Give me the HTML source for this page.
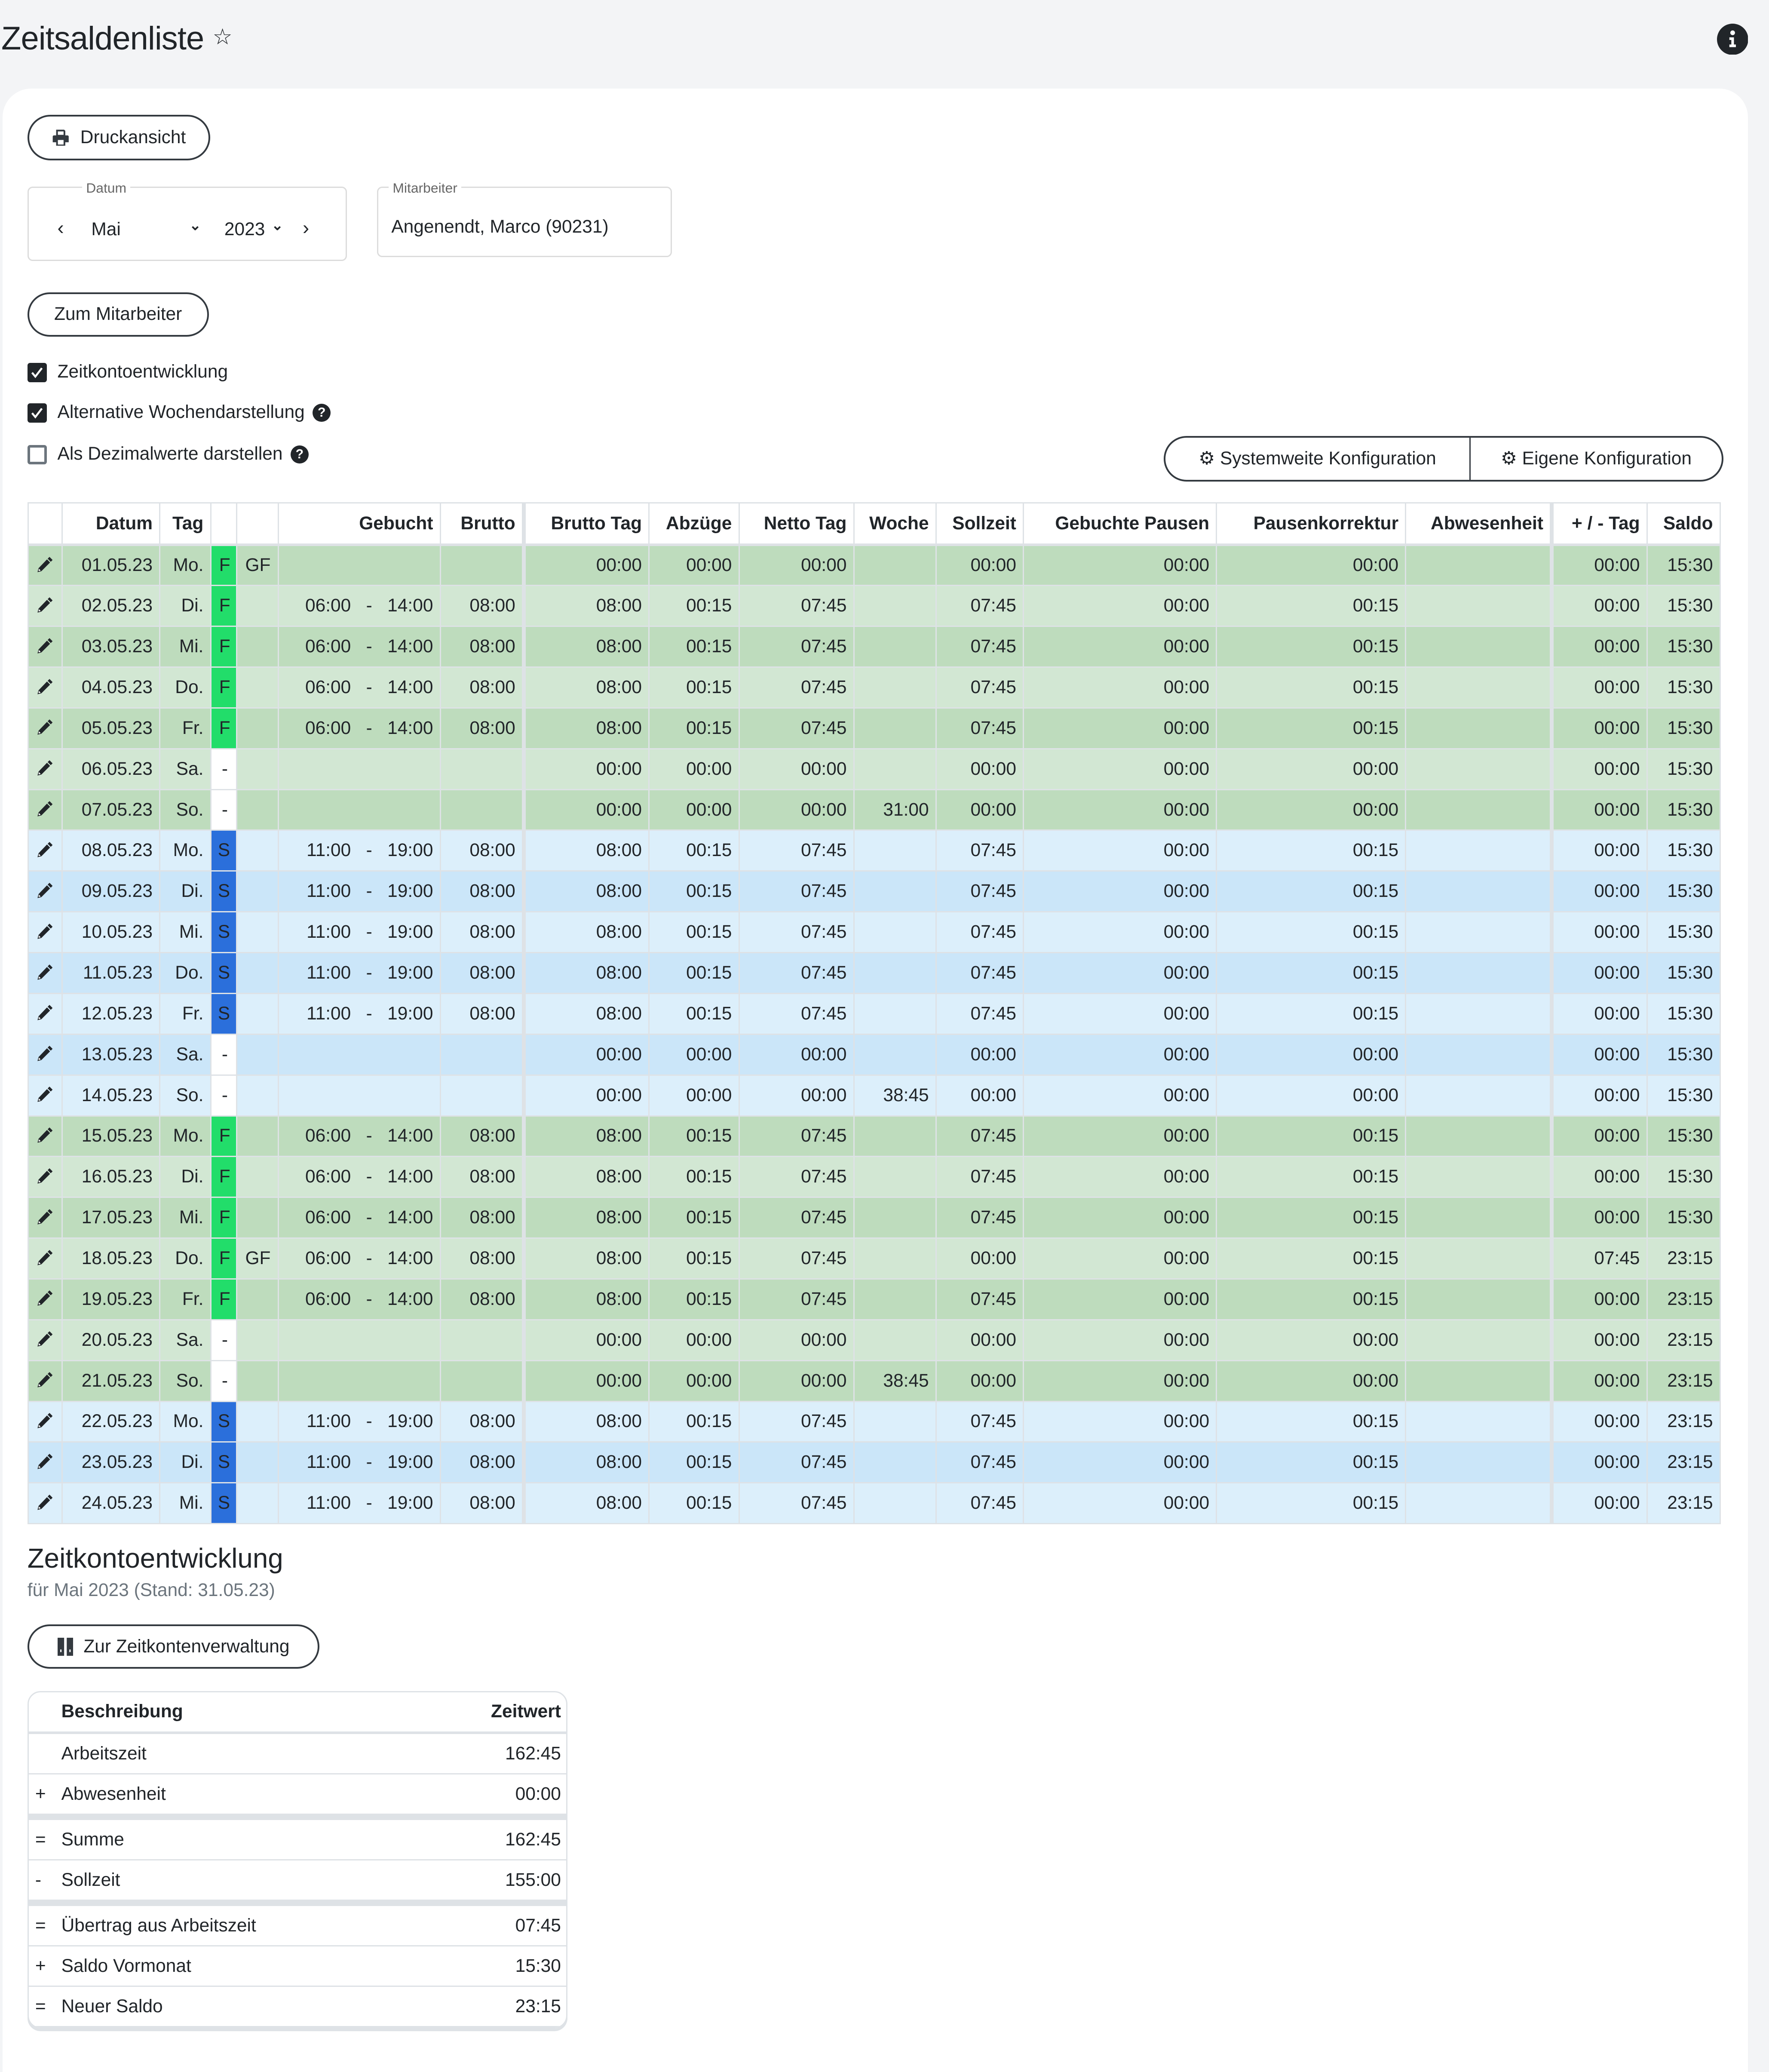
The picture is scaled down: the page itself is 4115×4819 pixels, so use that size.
<!DOCTYPE html>
<html><head><meta charset="utf-8">
<style>
html,body{margin:0;padding:0;}
body{width:4115px;height:4760px;overflow:hidden;background:#f3f4f6;}
#w{zoom:3.0347;width:1356px;height:1568px;position:relative;font-family:"Liberation Sans",sans-serif;color:#212529;font-size:14px;}
.a{position:absolute;}
h1{position:absolute;left:1px;top:15px;margin:0;font-size:25px;font-weight:normal;letter-spacing:-0.3px;}
.card{position:absolute;left:2px;top:68px;width:1338px;height:1520px;background:#fff;border-radius:22px 22px 0 0;}
.btn{position:absolute;border:1.5px solid #343a40;border-radius:18px;box-sizing:border-box;font-size:14px;display:flex;align-items:center;justify-content:center;background:#fff;}
.fs{position:absolute;border:1px solid #dcdcdc;border-radius:4px;box-sizing:border-box;}
.fs .lg{position:absolute;top:-6px;background:#fff;font-size:10.5px;color:#666;padding:0 3px;}
.cb{position:absolute;width:15px;height:15px;border-radius:2px;background:#212529;}
.cb.e{background:#fff;border:2px solid #6c757d;box-sizing:border-box;width:15px;height:15px}
.q{display:inline-block;width:14px;height:14px;border-radius:50%;background:#212529;color:#fff;font-size:10px;font-weight:bold;text-align:center;line-height:14px;vertical-align:1px;margin-left:6px}
table.t{position:absolute;left:21px;top:385px;border-collapse:collapse;table-layout:fixed;width:1298px;font-size:14px;}
table.t td,table.t th{border:1px solid #dee2e6;height:31.26px;padding:0 5px 0 0;text-align:right;white-space:nowrap;overflow:hidden;box-sizing:border-box}
table.t th{height:32px;background:#fff;font-weight:bold;border-bottom:2px solid #dee2e6}
table.t td.p{padding:0;text-align:center}
table.t td.k{padding:0 0 0 6px;text-align:left}
table.t td.f{background:#22dd6a!important;text-align:left;padding-left:6px}
table.t td.s{background:#2b6fdb!important;text-align:left;padding-left:5px}
table.t td.n{background:#fff!important;text-align:left;padding-left:8px}
.tk{border-right:3px solid #dee2e6!important}
tr.g1 td{background:#bedcbd} tr.g2 td{background:#d2e7d3}
tr.b1 td{background:#cbe6f9} tr.b2 td{background:#dceffb}
.pen{width:14px;height:14px;vertical-align:-2px}
.zw{position:absolute;left:21px;top:1296px;width:412px;border:1px solid #dee2e6;border-radius:10px;overflow:hidden;box-shadow:0 2px 0 #dee2e6}
table.z{width:100%;border-collapse:collapse;font-size:14px;}
table.z td,table.z th{border-bottom:1px solid #dee2e6;height:30px;padding:0 4px 0 0;text-align:left}
table.z th{font-weight:bold;border-bottom:2px solid #dee2e6}
table.z .r{text-align:right}
table.z .o{width:16px;padding-left:5px}
table.z tr.sep td{border-bottom:5px solid #dee2e6}
</style></head><body><div id="w">
<h1>Zeitsaldenliste <span style="font-size:17px;vertical-align:4px">☆</span></h1>
<svg class="a" style="left:1316px;top:18px" width="24" height="24" viewBox="0 0 24 24"><circle cx="12" cy="12" r="12" fill="#212529"/><circle cx="12" cy="7" r="1.8" fill="#fff"/><path d="M9.5 10.5h3.5v5.5h1.5v2h-5v-2h1.5v-3.5h-1.5z" fill="#fff"/></svg>
<div class="card"></div>

<div class="btn" style="left:21px;top:88px;width:140px;height:35px;"><svg width="14" height="14" viewBox="0 0 16 16" style="margin-right:8px"><path d="M4 1h7l1 1v4H4z M2 6h12a1 1 0 0 1 1 1v5h-3v3H4v-3H1V7a1 1 0 0 1 1-1z" fill="#343a40"/><rect x="5.5" y="10" width="5" height="4" fill="#fff"/><rect x="5.5" y="2.5" width="5" height="3" fill="#fff"/></svg>Druckansicht</div>

<div class="fs" style="left:21px;top:143px;width:245px;height:57px"><span class="lg" style="left:41px">Datum</span>
<span class="a" style="left:22px;top:22px;font-size:15px">‹</span><span class="a" style="left:48px;top:24px">Mai</span><span class="a" style="left:123px;top:22px;font-size:11px;font-weight:bold">⌄</span><span class="a" style="left:150px;top:24px">2023</span><span class="a" style="left:186px;top:22px;font-size:11px;font-weight:bold">⌄</span><span class="a" style="left:210px;top:22px;font-size:15px">›</span></div>
<div class="fs" style="left:289px;top:143px;width:226px;height:54px"><span class="lg" style="left:8px">Mitarbeiter</span><span class="a" style="left:10px;top:22px">Angenendt, Marco (90231)</span></div>

<div class="btn" style="left:21px;top:224px;width:139px;height:34px;">Zum Mitarbeiter</div>

<div class="cb" style="left:21px;top:278px"><svg width="15" height="15" viewBox="0 0 15 15"><path d="M3.5 7.5l2.5 3 5-6.5" stroke="#fff" stroke-width="1.5" fill="none"/></svg></div><span class="a" style="left:44px;top:277px">Zeitkontoentwicklung</span>
<div class="cb" style="left:21px;top:309px"><svg width="15" height="15" viewBox="0 0 15 15"><path d="M3.5 7.5l2.5 3 5-6.5" stroke="#fff" stroke-width="1.5" fill="none"/></svg></div><span class="a" style="left:44px;top:308px">Alternative Wochendarstellung<span class="q">?</span></span>
<div class="cb e" style="left:21px;top:341px"></div><span class="a" style="left:44px;top:340px">Als Dezimalwerte darstellen<span class="q">?</span></span>

<div class="btn" style="left:892px;top:334px;width:429px;height:35px;justify-content:flex-start">
<span style="width:233px;text-align:center;border-right:1px solid #343a40;height:33px;line-height:33px">⚙ Systemweite Konfiguration</span><span style="flex:1;text-align:center">⚙ Eigene Konfiguration</span></div>

<svg width="0" height="0" style="position:absolute"><defs><symbol id="pn" viewBox="0 0 16 16"><path d="M12.1 1.2l2.7 2.7-1.6 1.6-2.7-2.7z M9.9 3.4l2.7 2.7-7.6 7.6-3.4.9.9-3.5z" fill="#212529"/><path d="M2.8 11.6l1.6 1.6-1.9.4z" fill="#fff"/></symbol></defs></svg>

<table class="t">
<colgroup><col style="width:26px"><col style="width:75px"><col style="width:39px"><col style="width:20px"><col style="width:32px"><col style="width:124px"><col style="width:64px"><col style="width:96px"><col style="width:69px"><col style="width:88px"><col style="width:63px"><col style="width:67px"><col style="width:148px"><col style="width:145px"><col style="width:112px"><col style="width:73px"><col style="width:56px"></colgroup>
<tr><th></th><th>Datum</th><th>Tag</th><th></th><th></th><th>Gebucht</th><th class="tk">Brutto</th><th>Brutto Tag</th><th>Abzüge</th><th>Netto Tag</th><th>Woche</th><th>Sollzeit</th><th>Gebuchte Pausen</th><th>Pausenkorrektur</th><th class="tk">Abwesenheit</th><th>+ / - Tag</th><th>Saldo</th></tr>
<tr class="g1"><td class="p"><svg class="pen"><use href="#pn"/></svg></td><td>01.05.23</td><td>Mo.</td><td class="f">F</td><td class="k">GF</td><td></td><td class="tk"></td><td>00:00</td><td>00:00</td><td>00:00</td><td></td><td>00:00</td><td>00:00</td><td>00:00</td><td class="tk"></td><td>00:00</td><td>15:30</td></tr>
<tr class="g2"><td class="p"><svg class="pen"><use href="#pn"/></svg></td><td>02.05.23</td><td>Di.</td><td class="f">F</td><td></td><td>06:00 &nbsp; - &nbsp; 14:00</td><td class="tk">08:00</td><td>08:00</td><td>00:15</td><td>07:45</td><td></td><td>07:45</td><td>00:00</td><td>00:15</td><td class="tk"></td><td>00:00</td><td>15:30</td></tr>
<tr class="g1"><td class="p"><svg class="pen"><use href="#pn"/></svg></td><td>03.05.23</td><td>Mi.</td><td class="f">F</td><td></td><td>06:00 &nbsp; - &nbsp; 14:00</td><td class="tk">08:00</td><td>08:00</td><td>00:15</td><td>07:45</td><td></td><td>07:45</td><td>00:00</td><td>00:15</td><td class="tk"></td><td>00:00</td><td>15:30</td></tr>
<tr class="g2"><td class="p"><svg class="pen"><use href="#pn"/></svg></td><td>04.05.23</td><td>Do.</td><td class="f">F</td><td></td><td>06:00 &nbsp; - &nbsp; 14:00</td><td class="tk">08:00</td><td>08:00</td><td>00:15</td><td>07:45</td><td></td><td>07:45</td><td>00:00</td><td>00:15</td><td class="tk"></td><td>00:00</td><td>15:30</td></tr>
<tr class="g1"><td class="p"><svg class="pen"><use href="#pn"/></svg></td><td>05.05.23</td><td>Fr.</td><td class="f">F</td><td></td><td>06:00 &nbsp; - &nbsp; 14:00</td><td class="tk">08:00</td><td>08:00</td><td>00:15</td><td>07:45</td><td></td><td>07:45</td><td>00:00</td><td>00:15</td><td class="tk"></td><td>00:00</td><td>15:30</td></tr>
<tr class="g2"><td class="p"><svg class="pen"><use href="#pn"/></svg></td><td>06.05.23</td><td>Sa.</td><td class="n">-</td><td></td><td></td><td class="tk"></td><td>00:00</td><td>00:00</td><td>00:00</td><td></td><td>00:00</td><td>00:00</td><td>00:00</td><td class="tk"></td><td>00:00</td><td>15:30</td></tr>
<tr class="g1"><td class="p"><svg class="pen"><use href="#pn"/></svg></td><td>07.05.23</td><td>So.</td><td class="n">-</td><td></td><td></td><td class="tk"></td><td>00:00</td><td>00:00</td><td>00:00</td><td>31:00</td><td>00:00</td><td>00:00</td><td>00:00</td><td class="tk"></td><td>00:00</td><td>15:30</td></tr>
<tr class="b2"><td class="p"><svg class="pen"><use href="#pn"/></svg></td><td>08.05.23</td><td>Mo.</td><td class="s">S</td><td></td><td>11:00 &nbsp; - &nbsp; 19:00</td><td class="tk">08:00</td><td>08:00</td><td>00:15</td><td>07:45</td><td></td><td>07:45</td><td>00:00</td><td>00:15</td><td class="tk"></td><td>00:00</td><td>15:30</td></tr>
<tr class="b1"><td class="p"><svg class="pen"><use href="#pn"/></svg></td><td>09.05.23</td><td>Di.</td><td class="s">S</td><td></td><td>11:00 &nbsp; - &nbsp; 19:00</td><td class="tk">08:00</td><td>08:00</td><td>00:15</td><td>07:45</td><td></td><td>07:45</td><td>00:00</td><td>00:15</td><td class="tk"></td><td>00:00</td><td>15:30</td></tr>
<tr class="b2"><td class="p"><svg class="pen"><use href="#pn"/></svg></td><td>10.05.23</td><td>Mi.</td><td class="s">S</td><td></td><td>11:00 &nbsp; - &nbsp; 19:00</td><td class="tk">08:00</td><td>08:00</td><td>00:15</td><td>07:45</td><td></td><td>07:45</td><td>00:00</td><td>00:15</td><td class="tk"></td><td>00:00</td><td>15:30</td></tr>
<tr class="b1"><td class="p"><svg class="pen"><use href="#pn"/></svg></td><td>11.05.23</td><td>Do.</td><td class="s">S</td><td></td><td>11:00 &nbsp; - &nbsp; 19:00</td><td class="tk">08:00</td><td>08:00</td><td>00:15</td><td>07:45</td><td></td><td>07:45</td><td>00:00</td><td>00:15</td><td class="tk"></td><td>00:00</td><td>15:30</td></tr>
<tr class="b2"><td class="p"><svg class="pen"><use href="#pn"/></svg></td><td>12.05.23</td><td>Fr.</td><td class="s">S</td><td></td><td>11:00 &nbsp; - &nbsp; 19:00</td><td class="tk">08:00</td><td>08:00</td><td>00:15</td><td>07:45</td><td></td><td>07:45</td><td>00:00</td><td>00:15</td><td class="tk"></td><td>00:00</td><td>15:30</td></tr>
<tr class="b1"><td class="p"><svg class="pen"><use href="#pn"/></svg></td><td>13.05.23</td><td>Sa.</td><td class="n">-</td><td></td><td></td><td class="tk"></td><td>00:00</td><td>00:00</td><td>00:00</td><td></td><td>00:00</td><td>00:00</td><td>00:00</td><td class="tk"></td><td>00:00</td><td>15:30</td></tr>
<tr class="b2"><td class="p"><svg class="pen"><use href="#pn"/></svg></td><td>14.05.23</td><td>So.</td><td class="n">-</td><td></td><td></td><td class="tk"></td><td>00:00</td><td>00:00</td><td>00:00</td><td>38:45</td><td>00:00</td><td>00:00</td><td>00:00</td><td class="tk"></td><td>00:00</td><td>15:30</td></tr>
<tr class="g1"><td class="p"><svg class="pen"><use href="#pn"/></svg></td><td>15.05.23</td><td>Mo.</td><td class="f">F</td><td></td><td>06:00 &nbsp; - &nbsp; 14:00</td><td class="tk">08:00</td><td>08:00</td><td>00:15</td><td>07:45</td><td></td><td>07:45</td><td>00:00</td><td>00:15</td><td class="tk"></td><td>00:00</td><td>15:30</td></tr>
<tr class="g2"><td class="p"><svg class="pen"><use href="#pn"/></svg></td><td>16.05.23</td><td>Di.</td><td class="f">F</td><td></td><td>06:00 &nbsp; - &nbsp; 14:00</td><td class="tk">08:00</td><td>08:00</td><td>00:15</td><td>07:45</td><td></td><td>07:45</td><td>00:00</td><td>00:15</td><td class="tk"></td><td>00:00</td><td>15:30</td></tr>
<tr class="g1"><td class="p"><svg class="pen"><use href="#pn"/></svg></td><td>17.05.23</td><td>Mi.</td><td class="f">F</td><td></td><td>06:00 &nbsp; - &nbsp; 14:00</td><td class="tk">08:00</td><td>08:00</td><td>00:15</td><td>07:45</td><td></td><td>07:45</td><td>00:00</td><td>00:15</td><td class="tk"></td><td>00:00</td><td>15:30</td></tr>
<tr class="g2"><td class="p"><svg class="pen"><use href="#pn"/></svg></td><td>18.05.23</td><td>Do.</td><td class="f">F</td><td class="k">GF</td><td>06:00 &nbsp; - &nbsp; 14:00</td><td class="tk">08:00</td><td>08:00</td><td>00:15</td><td>07:45</td><td></td><td>00:00</td><td>00:00</td><td>00:15</td><td class="tk"></td><td>07:45</td><td>23:15</td></tr>
<tr class="g1"><td class="p"><svg class="pen"><use href="#pn"/></svg></td><td>19.05.23</td><td>Fr.</td><td class="f">F</td><td></td><td>06:00 &nbsp; - &nbsp; 14:00</td><td class="tk">08:00</td><td>08:00</td><td>00:15</td><td>07:45</td><td></td><td>07:45</td><td>00:00</td><td>00:15</td><td class="tk"></td><td>00:00</td><td>23:15</td></tr>
<tr class="g2"><td class="p"><svg class="pen"><use href="#pn"/></svg></td><td>20.05.23</td><td>Sa.</td><td class="n">-</td><td></td><td></td><td class="tk"></td><td>00:00</td><td>00:00</td><td>00:00</td><td></td><td>00:00</td><td>00:00</td><td>00:00</td><td class="tk"></td><td>00:00</td><td>23:15</td></tr>
<tr class="g1"><td class="p"><svg class="pen"><use href="#pn"/></svg></td><td>21.05.23</td><td>So.</td><td class="n">-</td><td></td><td></td><td class="tk"></td><td>00:00</td><td>00:00</td><td>00:00</td><td>38:45</td><td>00:00</td><td>00:00</td><td>00:00</td><td class="tk"></td><td>00:00</td><td>23:15</td></tr>
<tr class="b2"><td class="p"><svg class="pen"><use href="#pn"/></svg></td><td>22.05.23</td><td>Mo.</td><td class="s">S</td><td></td><td>11:00 &nbsp; - &nbsp; 19:00</td><td class="tk">08:00</td><td>08:00</td><td>00:15</td><td>07:45</td><td></td><td>07:45</td><td>00:00</td><td>00:15</td><td class="tk"></td><td>00:00</td><td>23:15</td></tr>
<tr class="b1"><td class="p"><svg class="pen"><use href="#pn"/></svg></td><td>23.05.23</td><td>Di.</td><td class="s">S</td><td></td><td>11:00 &nbsp; - &nbsp; 19:00</td><td class="tk">08:00</td><td>08:00</td><td>00:15</td><td>07:45</td><td></td><td>07:45</td><td>00:00</td><td>00:15</td><td class="tk"></td><td>00:00</td><td>23:15</td></tr>
<tr class="b2"><td class="p"><svg class="pen"><use href="#pn"/></svg></td><td>24.05.23</td><td>Mi.</td><td class="s">S</td><td></td><td>11:00 &nbsp; - &nbsp; 19:00</td><td class="tk">08:00</td><td>08:00</td><td>00:15</td><td>07:45</td><td></td><td>07:45</td><td>00:00</td><td>00:15</td><td class="tk"></td><td>00:00</td><td>23:15</td></tr>
</table>

<div class="a" style="left:21px;top:1182px;font-size:21px">Zeitkontoentwicklung</div>
<div class="a" style="left:21px;top:1211px;font-size:14px;color:#6c757d">für Mai 2023 (Stand: 31.05.23)</div>
<div class="btn" style="left:21px;top:1245px;width:224px;height:34px;"><svg width="12" height="14" viewBox="0 0 12 14" style="margin-right:8px"><rect x="0" y="0" width="5" height="14" fill="#343a40"/><rect x="7" y="0" width="5" height="14" fill="#343a40"/><rect x="2" y="9" width="1" height="2" fill="#fff"/><rect x="9" y="9" width="1" height="2" fill="#fff"/></svg>Zur Zeitkontenverwaltung</div>

<div class="zw"><table class="z">
<tr><th class="o"></th><th>Beschreibung</th><th class="r">Zeitwert</th></tr>
<tr><td class="o"></td><td>Arbeitszeit</td><td class="r">162:45</td></tr>
<tr class="sep"><td class="o">+</td><td>Abwesenheit</td><td class="r">00:00</td></tr>
<tr><td class="o">=</td><td>Summe</td><td class="r">162:45</td></tr>
<tr class="sep"><td class="o">-</td><td>Sollzeit</td><td class="r">155:00</td></tr>
<tr><td class="o">=</td><td>Übertrag aus Arbeitszeit</td><td class="r">07:45</td></tr>
<tr><td class="o">+</td><td>Saldo Vormonat</td><td class="r">15:30</td></tr>
<tr><td class="o">=</td><td>Neuer Saldo</td><td class="r">23:15</td></tr>
</table></div>
</div></body></html>
